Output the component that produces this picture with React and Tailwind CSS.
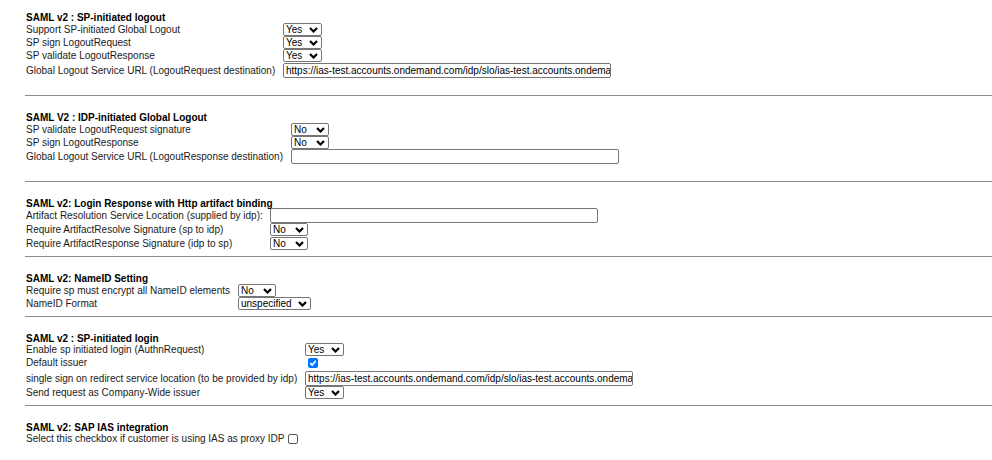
import React from 'react';

const URL = 'https://ias-test.accounts.ondemand.com/idp/slo/ias-test.accounts.ondemand.com';

const Chevron = () => (
  <svg width="9" height="6" viewBox="0 0 9 6" className="shrink-0">
    <path d="M1 1 L4.5 4.5 L8 1" fill="none" stroke="#000" strokeWidth="2.2" />
  </svg>
);

function Select({ value, width }) {
  return (
    <div
      className="flex items-center justify-between h-[13px] border border-[#767676] rounded-[2px] bg-white pl-[2px] pr-[3px] text-[10px] leading-none text-black"
      style={{ width }}
    >
      <span>{value}</span>
      <Chevron />
    </div>
  );
}

function TextInput({ value }) {
  return (
    <div className="flex items-center w-[328px] h-[15px] border border-[#767676] rounded-[2px] bg-white px-[2px] text-[10px] leading-none text-black overflow-hidden whitespace-nowrap">
      {value}
    </div>
  );
}

function Checkbox({ checked }) {
  if (checked) {
    return (
      <div className="w-[10px] h-[10px] rounded-[2px] bg-[#0075ff] flex items-center justify-center">
        <svg width="8" height="8" viewBox="0 0 8 8">
          <path d="M1.3 4.2 L3.2 6 L6.8 1.8" fill="none" stroke="#fff" strokeWidth="1.6" />
        </svg>
      </div>
    );
  }
  return <div className="w-[10px] h-[10px] rounded-[2px] border border-[#555] bg-white" />;
}

function Row({ label, children, h }) {
  return (
    <>
      <div className={`flex items-center ${h} whitespace-nowrap`}>{label}</div>
      <div className={`flex items-center ${h}`}>{children}</div>
    </>
  );
}

function Title({ children, className = '' }) {
  return <div className={`font-bold h-[11px] leading-[11px] text-black ${className}`}>{children}</div>;
}

const Rule = () => <div className="h-px bg-[#8a8a8a] ml-[25px]" />;

export default function App() {
  return (
    <div
      className="w-[992px] h-[460px] bg-white text-[10px] text-[#1a1a1a] overflow-hidden"
      style={{ fontFamily: '"Liberation Sans", Arial, sans-serif' }}
    >
      <div className="pl-[26px] pt-[12px] pb-[17px]">
        <Title>SAML v2 : SP-initiated logout</Title>
        <div className="grid grid-cols-[257px_auto]">
          <Row label="Support SP-initiated Global Logout" h="h-[13px]"><Select value="Yes" width={39} /></Row>
          <Row label="SP sign LogoutRequest" h="h-[13px]"><Select value="Yes" width={39} /></Row>
          <Row label="SP validate LogoutResponse" h="h-[13px]"><Select value="Yes" width={39} /></Row>
          <Row label="Global Logout Service URL (LogoutRequest destination)" h="h-[16px] pt-px"><TextInput value={URL} /></Row>
        </div>
      </div>
      <Rule />

      <div className="pl-[26px] pt-[16px] pb-[17px]">
        <Title>SAML V2 : IDP-initiated Global Logout</Title>
        <div className="grid grid-cols-[265px_auto]">
          <Row label="SP validate LogoutRequest signature" h="h-[13px]"><Select value="No" width={38} /></Row>
          <Row label="SP sign LogoutResponse" h="h-[13px]"><Select value="No" width={38} /></Row>
          <Row label="Global Logout Service URL (LogoutResponse destination)" h="h-[15px]"><TextInput value="" /></Row>
        </div>
      </div>
      <Rule />

      <div className="pl-[26px] pt-[16px] pb-[5px]">
        <Title className="mb-[-1px]">SAML v2: Login Response with Http artifact binding</Title>
        <div className="grid grid-cols-[244px_auto]">
          <Row label="Artifact Resolution Service Location (supplied by idp):" h="h-[15px] mb-[-1px]"><TextInput value="" /></Row>
          <Row label="Require ArtifactResolve Signature (sp to idp)" h="h-[14px] pt-px"><Select value="No" width={38} /></Row>
          <Row label="Require ArtifactResponse Signature (idp to sp)" h="h-[14px] pt-px"><Select value="No" width={38} /></Row>
        </div>
      </div>
      <div className="h-px" />
      <Rule />

      <div className="pl-[26px] pt-[16px] pb-[6px]">
        <Title>SAML v2: NameID Setting</Title>
        <div className="grid grid-cols-[212px_auto]">
          <Row label="Require sp must encrypt all NameID elements" h="h-[13px]"><Select value="No" width={38} /></Row>
          <Row label="NameID Format" h="h-[13px]"><Select value="unspecified" width={73} /></Row>
        </div>
      </div>
      <Rule />

      <div className="pl-[26px] pt-[16px] pb-[6px]">
        <Title className="mb-[-1px]">SAML v2 : SP-initiated login</Title>
        <div className="grid grid-cols-[279px_auto]">
          <Row label="Enable sp initiated login (AuthnRequest)" h="h-[13px]"><Select value="Yes" width={39} /></Row>
          <Row label="Default issuer" h="h-[13px]"><div className="pl-[3px]"><Checkbox checked /></div></Row>
          <Row label="single sign on redirect service location (to be provided by idp)" h="h-[17px] pt-[2px]"><TextInput value={URL} /></Row>
          <Row label="Send request as Company-Wide issuer" h="h-[13px]"><Select value="Yes" width={39} /></Row>
        </div>
      </div>
      <Rule />

      <div className="pl-[26px] pt-[16px]">
        <Title>SAML v2: SAP IAS integration</Title>
        <div className="flex items-center h-[11px] gap-[4px]">
          <span>Select this checkbox if customer is using IAS as proxy IDP</span>
          <Checkbox checked={false} />
        </div>
      </div>
    </div>
  );
}
